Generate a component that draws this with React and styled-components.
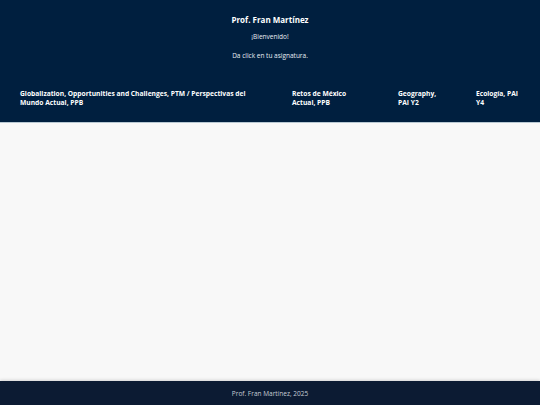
import React from "react";
import styled, { createGlobalStyle } from "styled-components";

const Global = createGlobalStyle`
  html, body { margin: 0; padding: 0; height: 100%; }
  body { font-family: "Open Sans", "Noto Sans", sans-serif; background: #f8f8f8; }
  #root { min-height: 100%; }
`;

const Page = styled.div`
  min-height: 100vh;
  display: flex;
  flex-direction: column;
`;

const Header = styled.header`
  background: #001f3f;
  color: #ffffff;
  padding: 14px 20px 15.5px;
  border-bottom: 1px solid #b9c9d3;
  text-align: center;
`;

const Title = styled.h1`
  margin: 0;
  font-size: 8px;
  line-height: 11px;
  font-weight: 700;
`;

const Line = styled.p`
  margin: ${(p) => p.$top}px 0 0;
  font-size: 6.5px;
  line-height: 9px;
  color: #e8eef4;
`;

const Nav = styled.nav`
  margin-top: 29px;
  display: grid;
  grid-template-columns: 252px 86px 58px 44px;
  column-gap: 20px;
  text-align: left;
`;

const NavItem = styled.a`
  display: block;
  max-width: ${(p) => p.$max}px;
  font-size: 6.7px;
  line-height: 9px;
  font-weight: 700;
  color: #ffffff;
  text-decoration: none;
`;

const Main = styled.main`
  flex: 1;
  background: #f8f8f8;
`;

const Footer = styled.footer`
  background: #0c1b33;
  color: #c6ccd6;
  height: 24px;
  display: flex;
  align-items: center;
  justify-content: center;
  font-size: 6.5px;
  box-shadow: 0 -1px 3px rgba(0, 0, 0, 0.15);
`;

const items = [
  { t: "Globalization, Opportunities and Challenges, PTM / Perspectivas del Mundo Actual, PPB", max: 240 },
  { t: "Retos de México Actual, PPB", max: 70 },
  { t: "Geography, PAI Y2", max: 46 },
  { t: "Ecología, PAI Y4", max: 44 },
];

export default function App() {
  return (
    <Page>
      <Global />
      <Header>
        <Title>Prof. Fran Martínez</Title>
        <Line $top={6.5}>¡Bienvenido!</Line>
        <Line $top={10}>Da click en tu asignatura.</Line>
        <Nav>
          {items.map((it) => (
            <NavItem key={it.t} href="#" $max={it.max}>
              {it.t}
            </NavItem>
          ))}
        </Nav>
      </Header>
      <Main />
      <Footer>Prof. Fran Martínez, 2025</Footer>
    </Page>
  );
}
